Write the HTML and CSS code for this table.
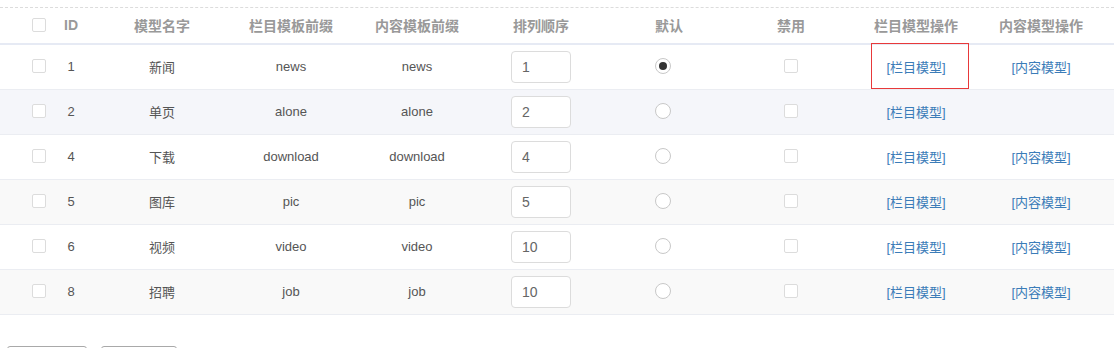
FILE: index.html
```html
<!DOCTYPE html>
<html lang="zh-CN">
<head>
<meta charset="utf-8">
<title>模型管理</title>
<link rel="stylesheet" href="styles.css">
</head>
<body>
<div class="page">
  <div class="table">
    <div class="row head">
      <div class="cell"><span class="cb"></span></div>
      <div class="cell">ID</div>
      <div class="cell">模型名字</div>
      <div class="cell">栏目模板前缀</div>
      <div class="cell">内容模板前缀</div>
      <div class="cell">排列顺序</div>
      <div class="cell cell-default">默认</div>
      <div class="cell">禁用</div>
      <div class="cell">栏目模型操作</div>
      <div class="cell">内容模型操作</div>
    </div>
    <div class="row">
      <div class="cell"><span class="cb"></span></div>
      <div class="cell">1</div>
      <div class="cell">新闻</div>
      <div class="cell">news</div>
      <div class="cell">news</div>
      <div class="cell"><input class="ord" type="text" value="1"></div>
      <div class="cell"><span class="radio checked"></span></div>
      <div class="cell"><span class="cb"></span></div>
      <div class="cell"><a class="lnk" href="#">[栏目模型]</a><span class="mark"></span></div>
      <div class="cell"><a class="lnk" href="#">[内容模型]</a></div>
    </div>
    <div class="row blue">
      <div class="cell"><span class="cb"></span></div>
      <div class="cell">2</div>
      <div class="cell">单页</div>
      <div class="cell">alone</div>
      <div class="cell">alone</div>
      <div class="cell"><input class="ord" type="text" value="2"></div>
      <div class="cell"><span class="radio"></span></div>
      <div class="cell"><span class="cb"></span></div>
      <div class="cell"><a class="lnk" href="#">[栏目模型]</a></div>
      <div class="cell"></div>
    </div>
    <div class="row">
      <div class="cell"><span class="cb"></span></div>
      <div class="cell">4</div>
      <div class="cell">下载</div>
      <div class="cell">download</div>
      <div class="cell">download</div>
      <div class="cell"><input class="ord" type="text" value="4"></div>
      <div class="cell"><span class="radio"></span></div>
      <div class="cell"><span class="cb"></span></div>
      <div class="cell"><a class="lnk" href="#">[栏目模型]</a></div>
      <div class="cell"><a class="lnk" href="#">[内容模型]</a></div>
    </div>
    <div class="row grey">
      <div class="cell"><span class="cb"></span></div>
      <div class="cell">5</div>
      <div class="cell">图库</div>
      <div class="cell">pic</div>
      <div class="cell">pic</div>
      <div class="cell"><input class="ord" type="text" value="5"></div>
      <div class="cell"><span class="radio"></span></div>
      <div class="cell"><span class="cb"></span></div>
      <div class="cell"><a class="lnk" href="#">[栏目模型]</a></div>
      <div class="cell"><a class="lnk" href="#">[内容模型]</a></div>
    </div>
    <div class="row">
      <div class="cell"><span class="cb"></span></div>
      <div class="cell">6</div>
      <div class="cell">视频</div>
      <div class="cell">video</div>
      <div class="cell">video</div>
      <div class="cell"><input class="ord" type="text" value="10"></div>
      <div class="cell"><span class="radio"></span></div>
      <div class="cell"><span class="cb"></span></div>
      <div class="cell"><a class="lnk" href="#">[栏目模型]</a></div>
      <div class="cell"><a class="lnk" href="#">[内容模型]</a></div>
    </div>
    <div class="row grey">
      <div class="cell"><span class="cb"></span></div>
      <div class="cell">8</div>
      <div class="cell">招聘</div>
      <div class="cell">job</div>
      <div class="cell">job</div>
      <div class="cell"><input class="ord" type="text" value="10"></div>
      <div class="cell"><span class="radio"></span></div>
      <div class="cell"><span class="cb"></span></div>
      <div class="cell"><a class="lnk" href="#">[栏目模型]</a></div>
      <div class="cell"><a class="lnk" href="#">[内容模型]</a></div>
    </div>
  </div>
  <div class="actions">
    <button class="btn btn-a" type="button" aria-label="排序"></button>
    <button class="btn btn-b" type="button" aria-label="删除"></button>
  </div>
</div>
</body>
</html>
```

FILE: styles.css
```css
* { box-sizing: border-box; }
html, body { margin: 0; padding: 0; background: #fff; }
body {
  font-family: "Liberation Sans", Arial, "Noto Sans CJK SC", sans-serif;
  font-size: 13px;
  color: #555;
}
.page {
  padding-top: 7px;
}
.table {
  border-top: 1px dashed #dcdcdc;
}
.row {
  display: grid;
  grid-template-columns: 30px 34px 148px 110px 142px 106px 138px 118px 132px 118px;
  padding-left: 24px;
  padding-bottom: 2px;
  height: 45px;
  border-bottom: 1px solid #ebedf2;
  align-items: center;
}
.row.head {
  height: 37px;
  border-bottom: 2px solid #e6eaf4;
  font-size: 14px;
  font-weight: bold;
  color: #999;
  padding-bottom: 1px;
}
.row.blue { background: #f5f6fa; }
.row.grey { background: #f9f9f9; }
.cell {
  position: relative;
  display: flex;
  justify-content: center;
  align-items: center;
  height: 100%;
  white-space: nowrap;
}
.head .cell-default { padding-left: 12px; }
.cb {
  display: block;
  width: 14px;
  height: 14px;
  border: 1px solid #dcdcdc;
  border-radius: 2px;
  background: #fff;
}
.ord {
  width: 60px;
  height: 32px;
  border: 1px solid #dcdcdc;
  border-radius: 4px;
  padding: 0 0 0 10px;
  font: 14px "Liberation Sans", Arial, sans-serif;
  color: #666;
  background: #fff;
  position: relative;
  top: 1px;
}
.radio {
  display: block;
  width: 16px;
  height: 16px;
  border: 1px solid #c8c8c8;
  border-radius: 50%;
  background: #fff;
  position: relative;
}
.radio.checked::after {
  content: "";
  position: absolute;
  left: 3px;
  top: 3px;
  width: 8px;
  height: 8px;
  border-radius: 50%;
  background: #333;
}
.lnk {
  color: #3b7cb8;
  text-decoration: none;
}
.mark {
  position: absolute;
  left: 21px;
  top: -2px;
  width: 98px;
  height: 46px;
  border: 1px solid #e8393a;
}
.actions {
  display: flex;
  gap: 14px;
  padding: 31px 0 0 7px;
}
.btn {
  height: 32px;
  border: 1px solid #a9a9a9;
  border-radius: 3px;
  background: #fff;
}
.btn-a { width: 80px; }
.btn-b { width: 76px; }
```
